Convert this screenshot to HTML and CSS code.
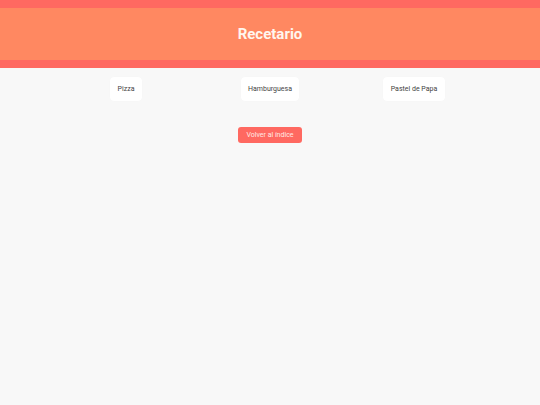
FILE: index.html
```html
<!DOCTYPE html>
<html lang="es">
<head>
<meta charset="utf-8">
<title>Recetario</title>
<link rel="stylesheet" href="styles.css">
</head>
<body>
<header class="header">
  <h1 class="title">Recetario</h1>
</header>
<main class="main">
  <div class="recipes">
    <div class="card">Pizza</div>
    <div class="card">Hamburguesa</div>
    <div class="card">Pastel de Papa</div>
  </div>
  <div class="actions">
    <a class="back" href="#">Volver al índice</a>
  </div>
</main>
</body>
</html>
```
FILE: styles.css
```css
html, body {
  margin: 0;
  padding: 0;
  background: #f8f8f8;
  font-family: Roboto, "Liberation Sans", sans-serif;
}
.header {
  background: #ff8861;
  border-top: 8px solid #ff6961;
  border-bottom: 8px solid #ff6961;
  height: 52px;
  display: flex;
  align-items: center;
  justify-content: center;
}
.title {
  margin: 0;
  color: #fff6ee;
  font-size: 15px;
  font-weight: 700;
}
.main {
  padding-top: 9px;
}
.recipes {
  width: 80%;
  margin: 0 auto;
  display: grid;
  grid-template-columns: 1fr 1fr 1fr;
  justify-items: center;
}
.card {
  background: #ffffff;
  border-radius: 4px;
  height: 24px;
  padding: 0 7.5px;
  display: flex;
  align-items: center;
  font-size: 7px;
  color: #444;
  box-shadow: 0 0 1px rgba(0,0,0,0.04);
}
.actions {
  display: flex;
  justify-content: center;
  margin-top: 26px;
}
.back {
  background: #ff6961;
  color: #ffe9e6;
  text-decoration: none;
  font-size: 7px;
  height: 16px;
  padding: 0 8px;
  border-radius: 3px;
  display: flex;
  align-items: center;
}
```
